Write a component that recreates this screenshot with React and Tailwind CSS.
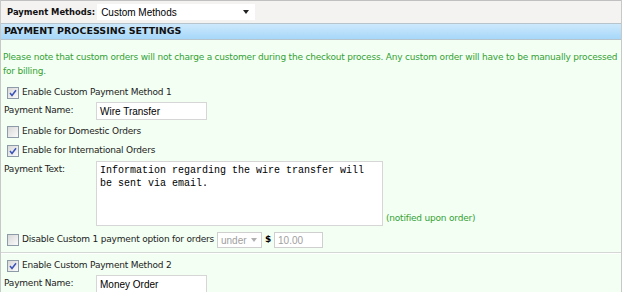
import React from 'react';

const verdana = { fontFamily: '"DejaVu Sans", Verdana, sans-serif' };
const arial = { fontFamily: '"Liberation Sans", Arial, sans-serif' };

function Check({ checked }) {
  return (
    <span className="inline-flex h-[12px] w-[12px] shrink-0 items-center justify-center border border-[#8d9aa8] bg-gradient-to-br from-[#d8d8d8] to-[#fbfbfb]">
      {checked && (
        <svg width="8" height="8" viewBox="0 0 8 8">
          <path d="M1 4 L3 6.5 L7 1.2" fill="none" stroke="#3a52b5" strokeWidth="1.5" />
        </svg>
      )}
    </span>
  );
}

function CheckRow({ checked, label, className = '' }) {
  return (
    <div className={`flex items-center gap-[3px] pl-[6px] text-[9px] tracking-[-0.2px] text-[#222] ${className}`}>
      <Check checked={checked} />
      <span>{label}</span>
    </div>
  );
}

function NameRow({ value, className = '' }) {
  return (
    <div className={`flex h-[18px] items-center text-[9px] tracking-[-0.2px] text-[#222] ${className}`}>
      <span className="w-[95px] pl-[3px]">Payment Name:</span>
      <div
        className="flex h-[18px] w-[111px] items-center border border-[#d6d6d6] bg-white px-[3px] text-[10px] tracking-normal text-black"
        style={arial}
      >
        {value}
      </div>
    </div>
  );
}

export default function App() {
  return (
    <div className="h-[292px] w-[623px] overflow-hidden bg-white" style={verdana}>
      <div className="h-[292px] w-[622px] border-r border-l border-[#c8c8c8] bg-[#f3fff3]">
        <div className="flex h-[23px] items-center gap-[2px] border-t border-[#c0c0c0] bg-[#f4f3f2] pl-[6px]">
          <span className="text-[8.4px] font-bold text-[#111]">Payment Methods:</span>
          <div
            className="flex h-[16px] w-[158px] items-center justify-between bg-white pl-[4px] pr-[6px] text-[10px] text-black"
            style={arial}
          >
            <span>Custom Methods</span>
            <svg width="6" height="4" viewBox="0 0 6 4">
              <path d="M0 0 H6 L3 4 Z" fill="#222" />
            </svg>
          </div>
        </div>
        <div className="flex h-[17px] items-center border-t border-b border-[#b8c4cc] bg-gradient-to-b from-[#cde9fc] to-[#a6d7f9] pl-[3px] text-[9.5px] font-bold text-[#111]">
          PAYMENT PROCESSING SETTINGS
        </div>
        <p className="px-[2px] pt-[10px] text-[9px] leading-[14px] tracking-[-0.2px] text-[#33a133]">
          Please note that custom orders will not charge a customer during the checkout process. Any custom order will have to be manually processed for billing.
        </p>
        <CheckRow checked label="Enable Custom Payment Method 1" className="mt-[6px] h-[18px]" />
        <NameRow value="Wire Transfer" />
        <CheckRow label="Enable for Domestic Orders" className="mt-[2px] h-[19px]" />
        <CheckRow checked label="Enable for International Orders" className="h-[19px]" />
        <div className="mt-[1px] flex text-[9px] tracking-[-0.2px] text-[#222]">
          <span className="w-[95px] pl-[3px] pt-[2px]">Payment Text:</span>
          <div
            className="h-[65px] w-[287px] border border-[#d6d6d6] bg-white px-[3px] pt-[2px] text-[10px] leading-[13px] tracking-normal text-black"
            style={{ fontFamily: '"Liberation Mono", "Courier New", monospace' }}
          >
            Information regarding the wire transfer will<br />be sent via email.
          </div>
          <span className="self-end pl-[3px] pb-[1px] text-[#33a133]">(notified upon order)</span>
        </div>
        <div className="mt-[5px] flex h-[18px] items-center gap-[3px] pl-[6px] text-[9px] tracking-[-0.2px] text-[#222]">
          <Check />
          <span>Disable Custom 1 payment option for orders</span>
          <div
            className="flex h-[16px] w-[45px] items-center justify-between border border-[#cfcfcf] bg-white pl-[3px] pr-[4px] text-[10px] tracking-normal text-[#a0a0a0]"
            style={arial}
          >
            <span>under</span>
            <svg width="6" height="4" viewBox="0 0 6 4">
              <path d="M0 0 H6 L3 4 Z" fill="#b0b0b0" />
            </svg>
          </div>
          <span className="font-bold text-black">$</span>
          <div
            className="flex h-[16px] w-[49px] items-center border border-[#cfcfcf] bg-white pl-[3px] text-[10px] tracking-normal text-[#a0a0a0]"
            style={arial}
          >
            10.00
          </div>
        </div>
        <div className="mt-[3px] h-[2px] border-t border-b border-t-[#d4d8d4] border-b-white" />
        <CheckRow checked label="Enable Custom Payment Method 2" className="mt-[2px] h-[19px]" />
        <NameRow value="Money Order" />
      </div>
    </div>
  );
}
